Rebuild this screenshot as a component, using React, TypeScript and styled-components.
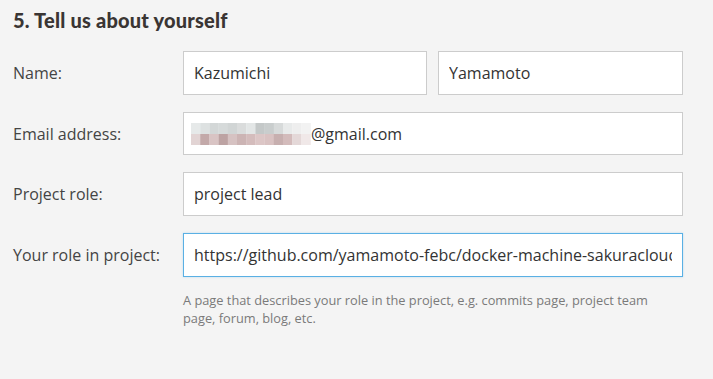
import React from "react";
import styled, { createGlobalStyle } from "styled-components";

const Global = createGlobalStyle`
  html, body { margin: 0; padding: 0; background: #f4f4f4; }
  body { font-family: "Open Sans", "Liberation Sans", sans-serif; }
`;

const Page = styled.div`
  width: 713px;
  height: 379px;
  background: #f4f4f4;
  padding: 8px 13px 0;
  box-sizing: border-box;
`;

const Title = styled.h2`
  margin: 0 0 19px;
  padding-top: 1px;
  font-family: Lato, "Open Sans", sans-serif;
  font-weight: 900;
  font-size: 20px;
  line-height: 23px;
  color: #3a3533;
  letter-spacing: 0.2px;
`;

const Form = styled.div`
  display: grid;
  grid-template-columns: 170px 500px;
  row-gap: 17px;
  align-items: center;
`;

const Label = styled.label`
  font-size: 16px;
  color: #444;
  line-height: 20px;
`;

const Pair = styled.div`
  display: grid;
  grid-template-columns: 244px 245px;
  column-gap: 11px;
`;

const Input = styled.input<{ $focus?: boolean }>`
  box-sizing: border-box;
  width: 100%;
  height: 43.7px;
  padding: 0 10px;
  border: 1px solid ${(p) => (p.$focus ? "#5ab0e4" : "#cccccc")};
  box-shadow: ${(p) => (p.$focus ? "0 0 2px rgba(90,176,228,0.35)" : "none")};
  background: #fff;
  font-family: "Open Sans", sans-serif;
  font-size: 16px;
  color: #333;
  outline: none;
  border-radius: 0;
`;

const FakeInput = styled.div`
  box-sizing: border-box;
  height: 43.7px;
  padding: 0 10px 0 7px;
  border: 1px solid #cccccc;
  background: #fff;
  display: flex;
  align-items: center;
  font-size: 16px;
  color: #333;
  white-space: nowrap;
`;

const Hint = styled.p`
  grid-column: 2;
  margin: -3px 0 0;
  max-width: 475px;
  font-size: 12.8px;
  line-height: 18px;
  color: #7a7a7a;
`;

const blobTop = ["#e6e9e9", "#dde1e1", "#d3d7d7", "#d6dada", "#d1d5d5", "#dadcdc", "#e3e6e6", "#c4c8c8", "#c9cdcd", "#d7dada", "#e8eaea", "#eeeeee", "#f2f2f2"];
const blobBot = ["#e2d4d4", "#c3a9a9", "#d9c4c4", "#bda3a3", "#d6c2c2", "#ccb4b4", "#d4bcbc", "#dcc6c6", "#d9c2c2", "#c7afaf", "#d3bbbb", "#e4d8d8", "#f0e8e8"];

const Blurred = () => (
  <svg width="120" height="22" viewBox="0 0 120 22" style={{ display: "block", flex: "none" }}>
    {blobTop.map((c, i) => (
      <rect key={"t" + i} x={i * 9.2} y={0} width={9.4} height={11} fill={c} />
    ))}
    {blobBot.map((c, i) => (
      <rect key={"b" + i} x={i * 9.2} y={11} width={9.4} height={11} fill={c} />
    ))}
  </svg>
);

export default function App() {
  return (
    <Page>
      <Global />
      <Title>5. Tell us about yourself</Title>
      <Form>
        <Label>Name:</Label>
        <Pair>
          <Input readOnly value="Kazumichi" />
          <Input readOnly value="Yamamoto" />
        </Pair>
        <Label>Email address:</Label>
        <FakeInput>
          <Blurred />
          <span>@gmail.com</span>
        </FakeInput>
        <Label>Project role:</Label>
        <Input readOnly value="project lead" />
        <Label>Your role in project:</Label>
        <Input $focus readOnly value="https://github.com/yamamoto-febc/docker-machine-sakuracloud" />
        <Hint>
          A page that describes your role in the project, e.g. commits page, project team page, forum, blog, etc.
        </Hint>
      </Form>
    </Page>
  );
}
